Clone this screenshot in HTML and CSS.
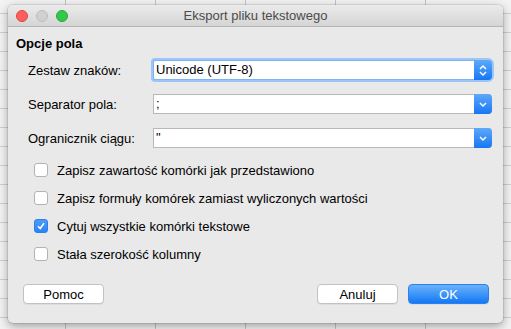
FILE: index.html
```html
<!DOCTYPE html>
<html>
	<head>
		<meta charset="UTF-8">
		<title>Eksport pliku tekstowego</title>
		<link rel="stylesheet" href="styles.css">
	</head>
	<body>
		<div class="dialog">
			<!-- pasek tytułu -->
			<div class="titlebar">
				<div class="lights">
					<span class="light red"></span>
					<span class="light gray"></span>
					<span class="light green"></span>
				</div>
				<div class="title">Eksport pliku tekstowego</div>
			</div>

			<div class="content">
				<div class="heading">Opcje pola</div>

				<div class="field">
					<label class="label">Zestaw znaków:</label>
					<div class="select focused">
						<span class="value">Unicode (UTF-8)</span>
						<span class="arrow">
							<svg width="10" height="13" viewBox="0 0 10 13"><path d="M2 5 L5 2 L8 5 M2 8 L5 11 L8 8" fill="none" stroke="#fff" stroke-width="1.5"/></svg>
						</span>
					</div>
				</div>

				<div class="field">
					<label class="label">Separator pola:</label>
					<div class="select">
						<span class="value">;</span>
						<span class="arrow">
							<svg width="10" height="13" viewBox="0 0 10 13"><path d="M2 5 L5 8 L8 5" fill="none" stroke="#fff" stroke-width="1.5"/></svg>
						</span>
					</div>
				</div>

				<div class="field last">
					<label class="label">Ogranicznik ciągu:</label>
					<div class="select">
						<span class="value">"</span>
						<span class="arrow">
							<svg width="10" height="13" viewBox="0 0 10 13"><path d="M2 5 L5 8 L8 5" fill="none" stroke="#fff" stroke-width="1.5"/></svg>
						</span>
					</div>
				</div>

				<div class="checks">
					<div class="check"><span class="box"></span>Zapisz zawartość komórki jak przedstawiono</div>
					<div class="check"><span class="box"></span>Zapisz formuły komórek zamiast wyliczonych wartości</div>
					<div class="check"><span class="box checked"><svg width="10" height="10" viewBox="0 0 10 10"><path d="M2 5.2 L4.2 7.5 L8 2.2" fill="none" stroke="#fff" stroke-width="1.6"/></svg></span>Cytuj wszystkie komórki tekstowe</div>
					<div class="check"><span class="box"></span>Stała szerokość kolumny</div>
				</div>
			</div>

			<div class="buttons">
				<button class="btn">Pomoc</button>
				<div class="spacer"></div>
				<button class="btn">Anuluj</button>
				<button class="btn primary">OK</button>
			</div>
		</div>
	</body>
</html>
```

FILE: styles.css
```css
*{
	margin: 0;
	padding: 0;
	box-sizing: border-box;
}

body{
	width: 511px;
	height: 329px;
	overflow: hidden;
	padding: 5px 8px 0 8px;
	font-family: "Liberation Sans", Arial, sans-serif;
	font-size: 13px;
	color: #000;
	/* arkusz w tle */
	background-color: #f2f2f2;
	background-image:
		linear-gradient(to right, #c4c4c4 1px, transparent 1px),
		linear-gradient(to bottom, #cfcfcf 1px, transparent 1px);
	background-size: 90px 19px;
	background-position: 65px 13px;
}

.dialog{
	width: 495px;
	height: 318px;
	background-color: #e9e9e9;
	border-radius: 5px;
	box-shadow: 0 3px 10px rgba(0,0,0,0.35), 0 0 0 1px rgba(0,0,0,0.08);
	display: flex;
	flex-direction: column;
	overflow: hidden;
}

.titlebar{
	height: 22px;
	display: flex;
	align-items: center;
	background: linear-gradient(#ebebeb, #d5d5d5);
	border-bottom: 1px solid #b5b5b5;
	position: relative;
}

.lights{
	display: flex;
	gap: 8px;
	padding-left: 8px;
}

.light{
	width: 12px;
	height: 12px;
	border-radius: 50%;
}

.red{
	background-color: #fc605c;
	border: 1px solid #e0443e;
}

.gray{
	background-color: #d0d0d0;
	border: 1px solid #bcbcbc;
}

.green{
	background-color: #34c84a;
	border: 1px solid #24a93a;
}

.title{
	position: absolute;
	left: 0;
	right: 0;
	text-align: center;
	color: #4b4b4b;
	pointer-events: none;
}

.content{
	padding: 9px 11px 0 8px;
}

.heading{
	font-weight: bold;
	line-height: 16px;
	margin-bottom: 8px;
}

.field{
	display: flex;
	align-items: center;
	height: 20px;
	margin-bottom: 14px;
}

.field.last{
	margin-bottom: 8px;
}

.label{
	width: 137px;
	padding-left: 12px;
}

.select{
	flex: 1;
	height: 20px;
	display: flex;
	background-color: #fff;
	border: 1px solid #b9b9b9;
	border-right: none;
	border-radius: 0 4px 4px 0;
}

.select.focused{
	border-color: #7eb4f3;
	box-shadow: 0 0 0 2px #9cc6f7;
	border-radius: 2px 4px 4px 2px;
}

.value{
	flex: 1;
	padding-left: 2px;
	line-height: 18px;
}

.arrow{
	width: 18px;
	margin-top: -1px;
	margin-bottom: -1px;
	display: flex;
	align-items: center;
	justify-content: center;
	background: linear-gradient(#5ea9f9, #1677f4);
	border-radius: 0 4px 4px 0;
}

.checks{
	padding-left: 18px;
}

.check{
	display: flex;
	align-items: center;
	height: 28px;
}

.box{
	width: 14px;
	height: 14px;
	margin-right: 9px;
	background-color: #fff;
	border: 1px solid #b3b3b3;
	border-radius: 3px;
	display: flex;
	align-items: center;
	justify-content: center;
}

.box.checked{
	background: linear-gradient(#4c9bf8, #2a84f5);
	border-color: #2a7ef0;
}

.buttons{
	margin-top: auto;
	display: flex;
	gap: 10px;
	padding: 0 14px 19px 15px;
}

.spacer{
	flex: 1;
}

.btn{
	width: 81px;
	height: 20px;
	font-family: "Liberation Sans", Arial, sans-serif;
	font-size: 13px;
	color: #000;
	background-color: #fff;
	border: 1px solid #c2c2c2;
	border-radius: 4px;
	box-shadow: 0 1px 0 rgba(0,0,0,0.05);
}

.btn.primary{
	color: #fff;
	background: linear-gradient(#6ab2fa, #1479f4);
	border-color: #2a80ee;
}
```
